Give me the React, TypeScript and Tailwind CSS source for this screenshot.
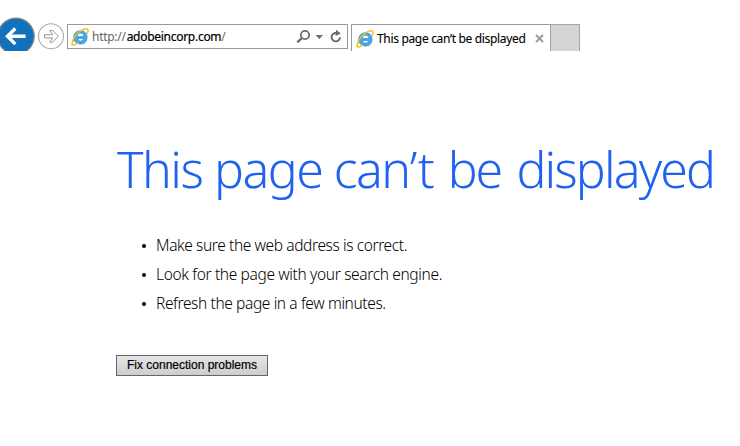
function IeLogo() {
  return (
    <svg className="h-[18px] w-[18px] shrink-0" viewBox="0 0 18 18" fill="none">
      <path d="M15.9 11.6C15 14.6 12.7 16 9.6 16C5.6 16 2.7 13.2 2.7 9.4C2.7 5.5 5.6 2.7 9.5 2.7C13.7 2.7 16.4 5.6 16.1 10.4H6.8C7 12.2 8.1 13.1 9.7 13.1C10.8 13.1 11.5 12.6 11.9 11.6Z" fill="#45aae8" stroke="#2485cb" strokeWidth=".7" />
      <path d="M6.9 7.9H12.1C11.9 6.4 11 5.6 9.5 5.6C8.1 5.6 7.1 6.4 6.9 7.9Z" fill="#fff" />
      <path d="M2.7 11.9C.7 14.8.4 17 2.2 17.1C3.3 17.2 5 16.4 6.8 15.1M1.5 13.2C2.9 9.2 6.9 4.5 11 2.2C14.3.4 17.2.3 17.1 2.5C17.1 3.4 16.7 4.4 16.2 5.4" stroke="#f4be22" strokeWidth="1.5" strokeLinecap="round" />
    </svg>
  );
}

function Toolbar() {
  return (
    <header className="flex h-[51px] items-start overflow-hidden font-['Noto_Sans','Open_Sans',sans-serif]">
      <svg className="h-[51px] w-[67px] shrink-0" viewBox="0 0 67 51" fill="none">
        <circle cx="16" cy="36.3" r="18.2" fill="#1171bd" stroke="#8b8987" strokeWidth="1.2" />
        <path d="M25.5 36.3H8M15.3 28.5L7.5 36.3L15.3 44.1" stroke="#fff" strokeWidth="3.4" />
        <circle cx="51" cy="36.3" r="12.5" fill="#fff" stroke="#aaa" strokeWidth="1.1" />
        <path d="M44.5 34.7H52.8L49.7 30.5H52.7L58.5 36.3L52.7 42.1H49.7L52.8 38H44.5Z" stroke="#999" strokeWidth="1" />
      </svg>
      <div className="mt-6 flex h-[25px] w-[281px] shrink-0 items-center border border-[#999] bg-white pl-[3px]">
        <IeLogo />
        <span className="ml-[3px] whitespace-nowrap pt-px text-[12px] leading-4 tracking-[-0.28px] text-[#666]">
          http://<span className="ml-px text-black [-webkit-text-stroke:0.2px_#000]">adobeincorp.com</span>/
        </span>
        <svg className="ml-auto h-[23px] w-[54px]" viewBox="293 25 54 23" fill="none" stroke="#6b6b6b">
          <circle cx="305" cy="35" r="4.2" strokeWidth="1.8" />
          <path d="M301.9 38.2L297.2 42.3" strokeWidth="2.3" />
          <path d="M315.6 35H323L319.3 39Z" fill="#6b6b6b" stroke="none" />
          <path d="M336.5 33A4.2 4.2 0 1 0 340 37.2" strokeWidth="1.9" />
          <path d="M336 29.8L340.8 33.6L335.6 36Z" fill="#6b6b6b" stroke="none" />
        </svg>
      </div>
      <div className="ml-[3px] mt-6 flex h-[27px] w-[199px] shrink-0 items-center border-l border-t border-[#999] bg-white pl-1 pt-px">
        <IeLogo />
        <span className="ml-[3px] whitespace-nowrap pt-px text-[12px] leading-4 tracking-[-0.33px] text-black [-webkit-text-stroke:0.1px_#000]">This page can’t be displayed</span>
        <svg className="ml-auto mr-[6px] h-[9px] w-[9px]" viewBox="0 0 9 9" fill="none">
          <path d="M1 1L8 8M8 1L1 8" stroke="#999" strokeWidth="1.8" />
        </svg>
      </div>
      <div className="mt-6 h-[27px] w-[30px] shrink-0 border-x border-t border-[#a5a5a5] bg-[#d4d4d4]" />
    </header>
  );
}

const suggestions = [
  { text: "Make sure the web address is correct.", className: "tracking-[-0.39px]" },
  { text: "Look for the page with your search engine.", className: "tracking-[-0.35px]" },
  { text: "Refresh the page in a few minutes.", className: "tracking-[-0.38px]" },
];

export default function App() {
  return (
    <div className="h-[446px] w-[740px] overflow-hidden bg-white">
      <Toolbar />
      <main className="pl-[116px] pt-[84px] font-['Noto_Sans','Open_Sans',sans-serif]">
        <h1 className="ml-px h-[68px] whitespace-nowrap text-[50px] font-light leading-[68px] tracking-[-1.5px] text-[#1f62f0]">
          This page can<span className="tracking-[0.5px]">’</span>t{" "}
          <span className="ml-[3px] tracking-[-2.2px]">be</span>{" "}
          <span className="ml-[4px] tracking-[-1.85px]">displayed</span>
        </h1>
        <ul className="mt-[28px] pl-[26px]">
          {suggestions.map((item) => (
            <li key={item.text} className="flex h-[29px] items-center whitespace-nowrap text-[15.5px] font-light text-black">
              <span className="mr-[10px] h-1 w-1 rounded-full bg-black" />
              <span className={item.className}>{item.text}</span>
            </li>
          ))}
        </ul>
        <button className="mt-[37px] block h-[21px] w-[152px] whitespace-nowrap border border-[#666] bg-linear-to-b from-[#e6e6e6] to-[#cdcdcd] font-['Liberation_Sans',Arial,sans-serif] text-[12px] leading-[19px] text-black [-webkit-text-stroke:0.2px_#000]">
          Fix connection problems
        </button>
      </main>
    </div>
  );
}
